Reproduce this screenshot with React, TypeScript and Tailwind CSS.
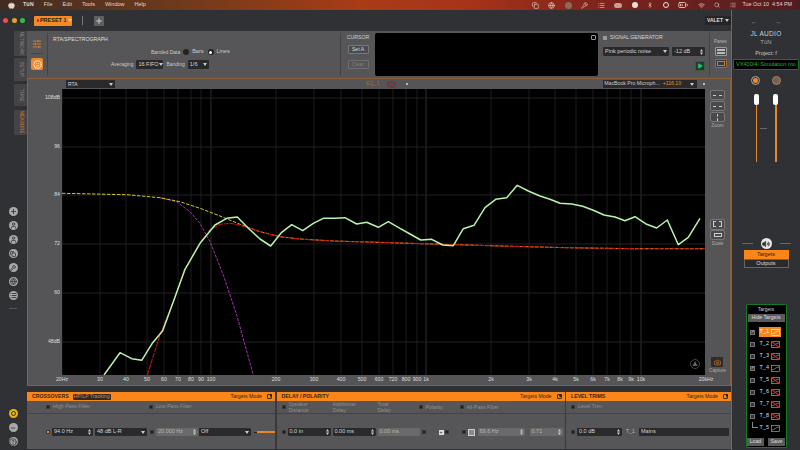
import React from "react";
import { Apple, Search, Bluetooth, Plus, Volume2, Play, Camera, SlidersHorizontal, Smile, Minus, HelpCircle, User, Wrench, Copy, List, Globe, Wifi, BatteryMedium } from "lucide-react";

const green = "104,375 120,352.7 131.7,358.7 141.7,360.3 152.7,342.7 162.7,330.7 173.3,301.7 185,269.3 200,243.3 215,225 226.7,218.3 237.3,217 248.3,228.3 260,239 270.7,246 281.7,232.3 291.7,224.7 302.7,230.7 313.3,223.3 323.3,218.3 335,218.3 345,217.7 356.7,224 366.7,222.3 378.3,227.3 388.3,221.7 400,228.3 410,234 420.7,240 431.7,239.3 442.7,245 453.3,245.7 463.3,228.7 474,225.3 485,207.7 495.7,199.3 506.7,197.7 517.3,185.3 528.3,191 540,196 550,199.3 560,203.3 571.7,204 582.7,206.3 593.3,210.3 604,215 615,217 625,220.7 635,216.7 646.7,224.3 656.7,228 667.3,220 678.3,244.7 688.3,237.3 700,218.3";
const yellow = "62,193.3 126.7,194.7 160,197.7 180,201.7 200,208.3 220,216 240,224.3 260,231.7 280,236.7 300,239 333,241 366.7,242 433,244 500,246 566.7,247.7 633,248.7 705,248.7";
const red = "147.3,375 160,335 173.3,301.7 185,269.3 200,243.3 210,230 220,224.3 230,223.3 240,225 260,231.7 280,236.7 300,239 333,241 366.7,242 433,244 500,246 566.7,247.7 633,248.7 705,248.7";
const purple = "160,197.7 176.7,201.7 190,211.7 200,223.3 210,241.7 223.3,275 236.7,315 253.3,375";

const freqs: [number, string][] = [[62, "20Hz"], [100, "30"], [126, "40"], [147, "50"], [164, "60"], [178, "70"], [191, "80"], [201, "90"], [211, "100"], [276, "200"], [314, "300"], [341, "400"], [362, "500"], [379, "600"], [393, "720"], [406, "800"], [417, "900"], [426, "1k"], [491, "2k"], [529, "3k"], [555, "4k"], [576, "5k"], [593, "6k"], [607, "7k"], [620, "8k"], [631, "9k"], [641, "10k"], [706, "20kHz"]];
const levels: [number, string][] = [[98, "108dB"], [147, "96"], [195, "84"], [244, "72"], [293, "60"], [342, "48dB"]];

function Caret() {
  return <svg width="4" height="3" viewBox="0 0 4 3" className="shrink-0"><path d="M0 0 H4 L2 3 Z" fill="#ccc" /></svg>;
}
function Spin() {
  return <svg width="3" height="6" viewBox="0 0 3 6" className="shrink-0"><path d="M0 2.4 L1.5 0 L3 2.4 Z M0 3.6 L1.5 6 L3 3.6 Z" fill="#ccc" /></svg>;
}

function Dot({ on = false }: { on?: boolean }) {
  return <span className={`block w-[4px] h-[4px] shrink-0 ${on ? "bg-[#e8872a]" : "bg-[#1d1d1d]"} border-[0.5px] border-[#3a3a3a]`} />;
}

function Field({ w, text, spin = false, caret = false, dim = false }: { w: string; text: string; spin?: boolean; caret?: boolean; dim?: boolean }) {
  return (
    <div className={`${w} shrink-0 rounded-[1px] flex items-center justify-between pl-[2px] pr-[2px] text-[5.5px] whitespace-nowrap ${dim ? "bg-[#6a6a6a] text-[#b5b5b5]" : "bg-[#2a2a2c] text-[#d5d5d5]"}`}>
      <span>{text}</span>
      {caret && <Caret />}
      {spin && <Spin />}
    </div>
  );
}

function Header({ title, mode = true, extra }: { title: string; mode?: boolean; extra?: React.ReactNode }) {
  return (
    <div className="h-[9px] bg-[#fa8518] flex items-center pl-[5px] pr-[3px] text-[5.2px] font-bold text-[#3a2410] shrink-0 whitespace-nowrap">
      <span>{title}</span>
      {extra}
      {mode && <span className="ml-auto mr-[5px] font-normal">Targets Mode</span>}
      {mode && <span className="relative w-[5px] h-[5px] border-[0.5px] border-[#4a2a0c] rounded-[1px]"><span className="absolute -top-[1px] -right-[1px] w-[2.5px] h-[2.5px] rounded-full bg-[#222]" /></span>}
    </div>
  );
}

function SmallBtn({ className = "", children }: { className?: string; children?: React.ReactNode }) {
  return <div className={`w-[15px] h-[10px] rounded-[2px] border-[0.5px] border-[#777] bg-[#4a4a4c] flex items-center justify-center ${className}`}>{children}</div>;
}

function RailIcon({ icon, className = "" }: { icon: React.ReactNode; className?: string }) {
  return <div className={`w-[9px] h-[9px] rounded-full bg-[#a9a9a9] flex items-center justify-center text-[#333] ${className}`}>{icon}</div>;
}

function Tab({ label, h, active = false }: { label: string; h: string; active?: boolean }) {
  return (
    <div className={`${h} w-[13px] ml-auto bg-[#444446] flex items-center justify-center rounded-l-[1px]`}>
      <span className={`text-[4.6px] rotate-90 whitespace-nowrap ${active ? "text-[#d87f2a]" : "text-[#8d8d8d]"}`}>{label}</span>
    </div>
  );
}

function TargetIcon({ off = false, active = false }: { off?: boolean; active?: boolean }) {
  return (
    <svg width="9" height="7" viewBox="0 0 9 7" className="shrink-0">
      <rect x="0.4" y="0.4" width="8.2" height="6.2" fill="none" stroke={active ? "#fff" : "#bbb"} strokeWidth="0.6" />
      <path d="M1 5 C3 5 5 2 8 2" fill="none" stroke={active ? "#fff" : "#bbb"} strokeWidth="0.6" />
      {off && <path d="M0 0 L9 7" stroke="#e02020" strokeWidth="1.1" />}
    </svg>
  );
}

function TargetRow({ name, checked = false, off = true, active = false, last = false }: { name: string; checked?: boolean; off?: boolean; active?: boolean; last?: boolean }) {
  return (
    <div className="h-[12px] flex items-center pl-[3px] relative">
      {last ? <span className="w-[6px] h-[6px] ml-[2px] -mt-[6px] mr-[1px] border-l-[0.5px] border-b-[0.5px] border-[#888] shrink-0" /> : (
        <span className="w-[5px] h-[5px] border-[0.5px] border-[#777] bg-[#333] mr-[4px] rounded-[0.5px] shrink-0 flex items-center justify-center text-[4px] leading-none text-white">{checked ? "✓" : ""}</span>
      )}
      <div className={`flex items-center justify-between h-[10px] w-[22px] px-[1px] text-[5.5px] ${active ? "bg-[#fa8518] text-white" : "text-[#ddd]"}`}>
        <span>{name}</span>
        <TargetIcon off={off} active={active} />
      </div>
    </div>
  );
}

export default function App() {
  return (
    <div className="w-[800px] h-[450px] overflow-hidden flex flex-col bg-[#2f3134] text-[#ddd] font-['Liberation_Sans',Arial,sans-serif] leading-none">
      {/* macOS menu bar */}
      <div className="h-[10px] shrink-0 flex items-center text-[5.5px] text-[#e8d5c8] bg-[linear-gradient(90deg,#402c22_0%,#6e3a1c_22%,#a83c16_45%,#a9331a_58%,#7e241c_75%,#501c22_100%)]">
        <Apple size={7} className="ml-[8px] mr-[8px] fill-current" />
        <span className="font-bold mr-[10px]">TüN</span>
        <span className="mr-[10px]">File</span>
        <span className="mr-[10px]">Edit</span>
        <span className="mr-[10px]">Tools</span>
        <span className="mr-[10px]">Window</span>
        <span>Help</span>
        <div className="ml-auto flex items-center gap-[9.5px] pr-[8px]">
          <Copy size={7} />
          <Globe size={7} />
          <span className="w-[7px] h-[7px] rounded-full bg-[#8a6a5a]" />
          <Wrench size={7} />
          <List size={7} />
          <span className="w-[8px] h-[5px] rounded-full bg-[#c9a08e]" />
          <span className="w-[6px] h-[6px] rounded-full bg-[#eadfd8]" />
          <Bluetooth size={6} />
          <span className="w-[6px] h-[6px] rounded-full border border-[#eadfd8]" />
          <BatteryMedium size={10} />
          <Wifi size={7} />
          <Search size={6} />
          <List size={6} />
          <span className="whitespace-nowrap ml-[-3px] text-[5.4px]">Tue Oct 10&nbsp;&nbsp;4:54 PM</span>
        </div>
      </div>

      <div className="flex-1 flex min-h-0">
        {/* main window */}
        <div className="w-[731px] flex flex-col shrink-0">
          {/* title bar */}
          <div className="h-[21px] flex items-center shrink-0 relative pl-[3px]">
            <span className="w-[5px] h-[5px] rounded-full bg-[#e8504a]" />
            <span className="w-[5px] h-[5px] rounded-full bg-[#e0a52a] ml-[3.5px]" />
            <span className="w-[5px] h-[5px] rounded-full bg-[#2fbf46] ml-[3.5px]" />
            <div className="ml-[9px] w-[38px] h-[10px] bg-[#f28a26] rounded-[1px] flex items-center pl-[3px] text-[5.5px] font-bold text-[#2a1a08] whitespace-nowrap">
              <span className="w-[3.5px] h-[3.5px] rounded-full bg-[#e01818] mr-[1px]" />PRESET 1<span className="ml-[1.5px]"><Caret /></span>
            </div>
            <span className="ml-[10px] w-[1px] h-[9px] bg-[#777]" />
            <div className="ml-[11px] w-[10px] h-[10px] bg-[#5e5e60] rounded-[1px] flex items-center justify-center text-[#ccc]"><Plus size={8} strokeWidth={3} /></div>
            <div className="ml-auto w-[26px] h-[9px] bg-[#242426] rounded-[1px] flex items-center justify-center text-[5px] font-bold text-[#ddd] gap-[2px]">VALET <Caret /></div>
          </div>

          <div className="flex-1 flex min-h-0">
            {/* left rail */}
            <div className="w-[27px] shrink-0 flex flex-col">
              <Tab label="NETWORK" h="h-[25px]" />
              <div className="h-[2px]" />
              <Tab label="SETUP" h="h-[23px]" />
              <div className="h-[3px]" />
              <Tab label="TUNE" h="h-[22px]" />
              <div className="h-[4px]" />
              <Tab label="MEASURE" h="h-[25px]" active />
              <div className="flex flex-col gap-[5px] items-center mt-[72px] w-[26px]">
                <RailIcon icon={<Plus size={7} strokeWidth={3} />} />
                <RailIcon icon={<User size={7} strokeWidth={3} />} />
                <RailIcon icon={<User size={7} strokeWidth={3} />} />
                <RailIcon icon={<Copy size={6} strokeWidth={3} />} />
                <RailIcon icon={<Wrench size={6} strokeWidth={3} />} />
                <RailIcon icon={<Globe size={7} strokeWidth={2.5} />} />
                <RailIcon icon={<List size={7} strokeWidth={3} />} className="bg-[#808080]" />
                <span className="w-[8px] h-[1px] bg-[#555] mt-[3px]" />
              </div>
              <div className="mt-auto mb-[4px] flex flex-col gap-[5px] items-center w-[26px]">
                <div className="w-[9px] h-[9px] rounded-full bg-[#e3b71c] flex items-center justify-center"><span className="w-[5px] h-[5px] rounded-full border border-[#3a3000]" /></div>
                <RailIcon icon={<Minus size={6} strokeWidth={3} />} className="bg-[#8f8f8f]" />
                <RailIcon icon={<HelpCircle size={8} strokeWidth={2.5} />} />
              </div>
            </div>

            {/* centre */}
            <div className="flex-1 flex flex-col min-w-0">
              {/* top panel */}
              <div className="h-[47px] shrink-0 bg-[#565658] flex items-stretch">
                <div className="w-[21px] shrink-0 flex flex-col items-center border-r border-[#444] my-[2px] pt-[6px] text-[#e8872a]">
                  <SlidersHorizontal size={10} />
                  <span className="w-[12px] h-[1px] bg-[#444] mt-[4px]" />
                  <div className="mt-[4px] w-[12px] h-[12px] rounded-[2px] bg-[#ef8a2e] flex items-center justify-center text-white"><Smile size={9} /></div>
                </div>
                <div className="w-[293px] shrink-0 flex flex-col border-r border-[#444] my-[2px] pl-[5px] pt-[4px]">
                  <span className="text-[5.2px] text-[#ddd]">RTA/SPECTROGRAPH</span>
                  <div className="flex items-center ml-[98px] mt-[7px] text-[5px] text-[#c8c8c8]">
                    <span>Banded Data</span>
                    <span className="w-[6px] h-[6px] rounded-full bg-[#222] ml-[3px]" />
                    <span className="ml-[3px] text-[5.5px]">Bars</span>
                    <span className="w-[6px] h-[6px] rounded-full bg-[#222] ml-[4px] flex items-center justify-center"><span className="w-[3px] h-[3px] rounded-full bg-white" /></span>
                    <span className="ml-[3px] text-[5.5px]">Lines</span>
                  </div>
                  <div className="flex items-center ml-[58px] mt-[5px] text-[5px] text-[#c8c8c8]">
                    <span>Averaging</span>
                    <Field w="w-[27px] ml-[3px] h-[9px]" text="16 FIFO" caret />
                    <span className="ml-[3px]">Banding</span>
                    <Field w="w-[21px] ml-[3px] h-[9px]" text="1/6" caret />
                  </div>
                </div>
                <div className="w-[34px] shrink-0 flex flex-col items-center pt-[4px] text-[5.2px]">
                  <span className="text-[#ccc]">CURSOR</span>
                  <div className="mt-[5px] w-[21px] h-[9px] bg-[#4c4c4e] border-[0.5px] border-[#777] rounded-[1px] flex items-center justify-center text-[5px]">Set A</div>
                  <div className="mt-[6px] w-[21px] h-[9px] border-[0.5px] border-[#6e6e6e] rounded-[1px] flex items-center justify-center text-[5px] text-[#808080]">Clear</div>
                </div>
                <div className="w-[223px] shrink-0 my-[2px] bg-black rounded-[2px] relative">
                  <span className="absolute top-[2px] right-[2px] w-[5px] h-[5px] border-[0.5px] border-[#999] rounded-[1px]" />
                </div>
                <div className="w-[111px] shrink-0 pl-[5px] pt-[4px] flex flex-col">
                  <div className="flex items-center text-[5.2px] text-[#d5d5d5]"><span className="w-[4px] h-[4px] bg-[#999] mr-[3px]" />SIGNAL GENERATOR</div>
                  <div className="flex mt-[7px] gap-[3px]">
                    <Field w="w-[66px] h-[9px]" text="Pink periodic noise" caret />
                    <Field w="w-[33px] h-[9px]" text="-12 dB" spin />
                  </div>
                  <div className="ml-[92px] mt-[5px] w-[10px] h-[10px] bg-[#243a2a] border-[0.5px] border-[#3b5a3f] rounded-[1px] flex items-center justify-center"><Play size={6} className="fill-[#22c36a] text-[#22c36a]" /></div>
                </div>
                <div className="flex-1 flex flex-col items-center pt-[7px] border-l border-[#444] my-[2px]">
                  <span className="text-[4.5px] text-[#bbb]">Panes</span>
                  <div className="mt-[2px] w-[12px] h-[9px] rounded-[1px] border-[0.5px] border-[#999] bg-[#4a4a4c] flex flex-col justify-center gap-[1px] px-[1px]"><span className="h-[1.5px] border-[0.5px] border-[#bbb]" /><span className="h-[1.5px] border-[0.5px] border-[#bbb]" /></div>
                  <div className="mt-[3px] w-[12px] h-[9px] rounded-[1px] border-[0.5px] border-[#a06a35] bg-[#3a3a3c] flex items-center justify-center"><span className="w-[8px] h-[5px] border-[0.5px] border-[#c87b30]" /></div>
                </div>
              </div>

              {/* graph panel */}
              <div className="h-[308px] shrink-0 border border-[#8c6038] bg-[#555557] flex flex-col">
                <div className="h-[10px] shrink-0 flex items-center relative">
                  <div className="ml-[38px] w-[49px] h-[8px] bg-[#2a2a2c] flex items-center justify-between px-[2px] text-[5px]"><span>RTA</span><Caret /></div>
                  <span className="ml-[251px] text-[5.2px] text-[#b06a28]">EQ_1</span>
                  <svg width="9" height="7" viewBox="0 0 9 7" className="ml-[8px]"><rect x="0" y="0" width="9" height="7" fill="#4a4a4c" /><path d="M0 0 L9 7 M0 7 L9 0" stroke="#d02828" strokeWidth="0.7" /></svg>
                  <span className="ml-[10px] w-[2px] h-[2px] rounded-full bg-[#ddd]" />
                  <div className="ml-[195px] w-[94px] h-[8px] bg-[#2a2a2c] flex items-center px-[1px] text-[5.2px] text-[#ccc] whitespace-nowrap">
                    <span>MacBook Pro Microph...</span><span className="ml-[3px] text-[#e8872a]">+116.10</span><span className="ml-auto mr-[2px]"><Caret /></span>
                  </div>
                  <span className="ml-[6px] w-[2px] h-[2px] rounded-full bg-[#ddd]" />
                </div>
                <div className="flex h-[286px] shrink-0">
                  <div className="w-[34px] shrink-0 relative">
                    {levels.map(([y, t]) => (
                      <span key={t} className="absolute right-[2px] text-[5.2px] text-[#ddd] -translate-y-1/2" style={{ top: y - 89 }}>{t}</span>
                    ))}
                  </div>
                  <svg width="643" height="286" viewBox="62 89 643 286" className="shrink-0 bg-black">
                    {freqs.map(([x], i) => (
                      <line key={i} x1={x} x2={x} y1="89" y2="375" stroke={[211, 426, 641].includes(x) ? "#2e2e2e" : "#1c1c1c"} strokeWidth="1" />
                    ))}
                    {levels.map(([y]) => (
                      <line key={y} x1="62" x2="705" y1={y} y2={y} stroke="#222" strokeWidth="1" />
                    ))}
                    <polyline points={purple} fill="none" stroke="#a434a8" strokeWidth="1" strokeDasharray="3 1.2" />
                    <polyline points={yellow} fill="none" stroke="#d8c81c" strokeWidth="1" strokeDasharray="3.5 1.5" />
                    <polyline points={red} fill="none" stroke="#cc1010" strokeWidth="1.1" strokeDasharray="5 1" />
                    <polyline points={green} fill="none" stroke="#b8f5a8" strokeWidth="1.5" strokeLinejoin="round" />
                    <circle cx="695" cy="364" r="4.5" fill="none" stroke="#555" strokeWidth="0.8" />
                    <path d="M695 361 L692.5 366 H697.5 Z" fill="#666" />
                  </svg>
                  <div className="flex-1 flex flex-col items-center pt-[1px] text-[4.8px] text-[#aaa]">
                    <SmallBtn><span className="w-[9px] border-t-[0.5px] border-dashed border-[#ccc]" /></SmallBtn>
                    <SmallBtn className="mt-[1px]"><span className="w-[9px] border-t-[0.5px] border-dashed border-[#ccc]" /></SmallBtn>
                    <SmallBtn className="mt-[1px]"><span className="h-[7px] border-l-[0.5px] border-dashed border-[#ccc]" /></SmallBtn>
                    <span className="mt-[2px]">Zoom</span>
                    <SmallBtn className="mt-[90px] h-[11px]"><span className="w-[9px] h-[6px] border-[0.5px] border-dashed border-[#ccc]" /></SmallBtn>
                    <SmallBtn className="bg-[#3c3c3e]"><span className="w-[8px] h-[4px] border-[0.5px] border-[#ccc]" /></SmallBtn>
                    <span className="mt-[2px]">Scale</span>
                    <div className="mt-auto mb-[1px] flex flex-col items-center">
                      <div className="w-[12px] h-[10px] bg-[#2c2c2e] flex items-center justify-center rounded-[1px]"><Camera size={7} className="text-[#e8872a]" /></div>
                      <span className="mt-[2px]">Capture</span>
                    </div>
                  </div>
                </div>
                <div className="flex-1 relative">
                  {freqs.map(([x, t]) => (
                    <span key={t} className="absolute top-[2px] text-[5.2px] text-[#ddd] -translate-x-1/2" style={{ left: x - 28 }}>{t}</span>
                  ))}
                </div>
              </div>

              {/* gap */}
              <div className="h-[6px] shrink-0" />

              {/* bottom panels */}
              <div className="h-[57px] shrink-0 flex bg-[#565658] text-[#8f8f8f]">
                <div className="w-[248px] shrink-0 flex flex-col">
                  <Header title="CROSSOVERS" extra={<span className="ml-[4px] bg-[#2c2c2e] text-[#e08030] px-[1px] h-[6px] flex items-center rounded-[1px] font-normal">HP/LP Tracking</span>} />
                  <div className="h-[13px] flex items-center border-b border-[#444] text-[5.2px]">
                    <span className="ml-[19px]"><Dot /></span><span className="ml-[3px]">High-Pass Filter</span>
                    <span className="ml-[59px]"><Dot /></span><span className="ml-[3px]">Low-Pass Filter</span>
                  </div>
                  <div className="flex items-center mt-[14px]">
                    <span className="ml-[19px]"><Dot on /></span>
                    <span className="ml-[2px]"><Field w="w-[41px] h-[8px]" text="94.0 Hz" spin /></span>
                    <span className="ml-[2px]"><Field w="w-[52px] h-[8px]" text="48 dB L-R" caret /></span>
                    <span className="ml-[3px]"><Dot /></span>
                    <span className="ml-[2px]"><Field w="w-[42px] h-[8px]" text="20,000 Hz" spin dim /></span>
                    <span className="ml-[1px]"><Field w="w-[52px] h-[8px]" text="Off" caret /></span>
                    <span className="ml-[3px] w-[3px] h-[1px] bg-[#222]" />
                    <span className="w-[18px] h-[1.5px] bg-[#e8872a]" />
                  </div>
                </div>
                <div className="w-[1.5px] shrink-0 bg-[#3a3a3c]" />
                <div className="w-[288px] shrink-0 flex flex-col">
                  <Header title="DELAY / POLARITY" />
                  <div className="h-[13px] flex items-center border-b border-[#444] text-[5.2px] leading-[6.5px]">
                    <span className="ml-[5px]"><Dot /></span>
                    <span className="ml-[3px] w-[44px]">Speaker<br />Distance</span>
                    <span className="w-[45px]">Additional<br />Delay</span>
                    <span className="w-[41px]">Total<br />Delay</span>
                    <Dot /><span className="ml-[3px] w-[34px]">Polarity</span>
                    <Dot /><span className="ml-[3px]">All-Pass Filter</span>
                  </div>
                  <div className="flex items-center mt-[14px]">
                    <span className="ml-[5px]"><Dot /></span>
                    <span className="ml-[2px]"><Field w="w-[43px] h-[8px]" text="0.0 in" spin /></span>
                    <span className="ml-[2px]"><Field w="w-[43px] h-[8px]" text="0.00 ms" spin /></span>
                    <span className="ml-[2px]"><Field w="w-[42px] h-[8px]" text="0.00 ms" dim /></span>
                    <span className="ml-[2px]"><Dot /></span>
                    <span className="ml-[13px] w-[5px] h-[5px] bg-[#ddd] flex items-center justify-center text-[#222] text-[5px]">+</span>
                    <span className="ml-[1px]"><Dot /></span>
                    <span className="ml-[13px]"><Dot /></span>
                    <span className="ml-[2px] w-[7px] h-[7px] bg-[#8a8a8a] border-[0.5px] border-[#ccc]" />
                    <span className="ml-[3px]"><Field w="w-[47px] h-[8px]" text="69.6 Hz" spin dim /></span>
                    <span className="ml-[5px]"><Field w="w-[33px] h-[8px]" text="0.71" spin dim /></span>
                  </div>
                </div>
                <div className="w-[1.5px] shrink-0 bg-[#3a3a3c]" />
                <div className="flex-1 flex flex-col min-w-0">
                  <Header title="LEVEL TRIMS" />
                  <div className="h-[13px] flex items-center border-b border-[#444] text-[5.2px]">
                    <span className="ml-[5px]"><Dot /></span><span className="ml-[3px]">Level Trim</span>
                  </div>
                  <div className="flex items-center mt-[14px]">
                    <span className="ml-[5px]"><Dot /></span>
                    <span className="ml-[2px]"><Field w="w-[45px] h-[8px]" text="0.0 dB" spin /></span>
                    <span className="ml-[4px] text-[5.2px] text-[#bbb] w-[13px]">T_1</span>
                    <Field w="w-[90px] h-[8px]" text="Mains" />
                  </div>
                </div>
              </div>
            </div>
          </div>
        </div>

        {/* right sidebar */}
        <div className="flex-1 flex flex-col items-center border-l border-[#8c6038] min-w-0">
          <div className="flex gap-[18px] mt-[9px] text-[6px] text-[#aaa]"><span>←</span><span>→</span></div>
          <span className="mt-[6px] text-[6.5px] text-[#d0d0d0] tracking-[0.3px]">JL AUDIO</span>
          <span className="mt-[1px] text-[6px] text-[#aaa]">TüN</span>
          <span className="mt-[6px] text-[5.5px] text-[#ccc]">Project: f</span>
          <div className="mt-[3px] w-[66px] h-[11px] bg-black border border-[#127a20] rounded-[1px] flex items-center overflow-hidden pl-[2px] text-[5.6px] text-[#2fae3c] whitespace-nowrap">VX400/4i Simulation mo</div>
          <div className="flex gap-[12px] mt-[6px]">
            <span className="w-[9px] h-[9px] rounded-full border-[1px] border-[#aaa] flex items-center justify-center"><span className="w-[4.5px] h-[4.5px] rounded-full bg-[#f28a26]" /></span>
            <span className="w-[9px] h-[9px] rounded-full border-[1.5px] border-[#c87b30] bg-[#666]" />
          </div>
          <div className="flex gap-[14.5px] mt-[9px] relative">
            <div className="flex flex-col items-center">
              <span className="w-[5px] h-[11px] bg-white rounded-[2px]" />
              <span className="w-[1.5px] h-[57px] bg-[#e8872a]" />
            </div>
            <span className="absolute left-[6.5px] top-[34px] w-[7px] h-[1px] bg-[#666]" />
            <div className="flex flex-col items-center">
              <span className="w-[5px] h-[11px] bg-white rounded-[2px]" />
              <span className="w-[1.5px] h-[57px] bg-[#e8872a]" />
            </div>
          </div>
          <div className="flex items-center mt-[76px]">
            <span className="w-[11px] h-[1px] bg-[#666]" />
            <span className="mx-[8px] w-[11px] h-[11px] rounded-full bg-[#e8e8e8] flex items-center justify-center text-[#333]"><Volume2 size={8} className="fill-current" /></span>
            <span className="w-[11px] h-[1px] bg-[#666]" />
          </div>
          <div className="w-[45px] mt-[1px] h-[9px] bg-[#fa8518] flex items-center justify-center text-[5.5px] text-[#2a1a08]">Targets</div>
          <div className="w-[45px] h-[9px] bg-[#2a2a2c] border-[0.5px] border-[#666] flex items-center justify-center text-[5.5px] text-[#ddd]">Outputs</div>
          <div className="mt-[36px] w-[41px] h-[144px] bg-black border border-[#127a20] flex flex-col items-center rounded-[1px]">
            <span className="text-[5px] text-[#ccc] mt-[2px]">Targets</span>
            <div className="w-[37px] h-[8px] mt-[2px] bg-[#5a5a5c] flex items-center justify-center text-[5.2px] text-[#ddd]">Hide Targets</div>
            <div className="w-full mt-[4px]">
              <TargetRow name="T_1" checked active off={false} />
              <TargetRow name="T_2" />
              <TargetRow name="T_3" />
              <TargetRow name="T_4" checked off={false} />
              <TargetRow name="T_5" />
              <TargetRow name="T_6" />
              <TargetRow name="T_7" />
              <TargetRow name="T_8" />
              <TargetRow name="T_5" off={false} last />
            </div>
            <div className="flex gap-[4px] mt-auto mb-[1px]">
              <div className="w-[17px] h-[8px] bg-[#5a5a5c] flex items-center justify-center text-[5.2px] text-[#ddd]">Load</div>
              <div className="w-[17px] h-[8px] bg-[#5a5a5c] flex items-center justify-center text-[5.2px] text-[#ddd]">Save</div>
            </div>
          </div>
        </div>
      </div>
    </div>
  );
}
